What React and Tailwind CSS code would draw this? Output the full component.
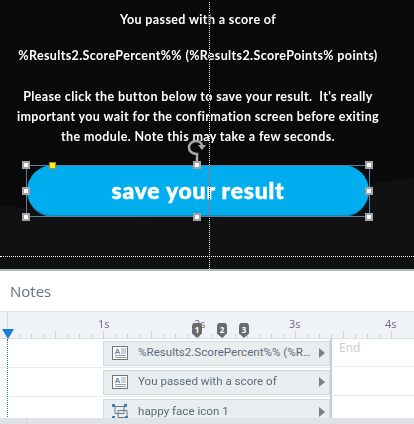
import React from "react";

const handles = [
  "left-[-5px] top-[-4px]",
  "left-[166px] top-[-4px]",
  "left-[338px] top-[-4px]",
  "left-[-5px] top-[22px]",
  "left-[338px] top-[22px]",
  "left-[-5px] top-[48px]",
  "left-[166px] top-[48px]",
  "left-[338px] top-[48px]",
];

const markers = [
  { n: 1, cls: "left-[192px]" },
  { n: 2, cls: "left-[217px]" },
  { n: 3, cls: "left-[239px]" },
];

function TextIcon() {
  return (
    <svg width="16" height="14" viewBox="0 0 16 14" className="shrink-0">
      <rect x="0.5" y="0.5" width="15" height="13" fill="#fff" stroke="#6f7880" />
      <text x="2.5" y="8" fontSize="8" fontWeight="700" fill="#6a7fc4" fontFamily="Liberation Sans, sans-serif">A</text>
      <path d="M9 3h5M9 5h5M9 7h5M3 9.5h11M3 11.5h11" stroke="#9aa3ab" strokeWidth="1" />
    </svg>
  );
}

function GroupIcon() {
  return (
    <svg width="16" height="16" viewBox="0 0 16 16" className="shrink-0">
      <path d="M3 2.5h9v7H3zM6 6.5h9v7H6z" fill="none" stroke="#6f7880" />
      <path d="M0 0h3v3H0zM12 0h3v3h-3zM0 12h3v3H0zM13 12h3v3h-3z" fill="#3f7fc0" />
    </svg>
  );
}

function Clip({ icon, children }) {
  return (
    <div className="ml-[103px] flex h-[25px] w-[227px] shrink-0 items-center border border-[#d3dade] bg-[#e8edf0] pl-[8px] pr-[4px]">
      {icon}
      <span className="ml-[10px] min-w-0 flex-1 truncate font-['Roboto',sans-serif] text-[11.6px] text-[#5c6c7a]">{children}</span>
      <span className="ml-[4px] h-0 w-0 border-y-[5px] border-l-[6px] border-y-transparent border-l-[#7a7f84]" />
    </div>
  );
}

export default function App() {
  return (
    <div className="relative h-[424px] w-[414px] overflow-hidden bg-white font-['Open_Sans',sans-serif]">
      {/* slide area */}
      <div className="relative h-[269px] bg-[#0a0a0a] text-white">
        <svg width="414" height="269" className="absolute inset-0">
          <path d="M0 205C60 212 110 218 200 218C280 218 340 184 414 178V269H0Z" fill="#111111" />
        </svg>
        <div className="relative w-[396px] pt-[10px] text-center font-['Lato',sans-serif] text-[12.5px] font-bold leading-[20px] tracking-[0.37px]">
          <p>You passed with a score of</p>
          <p className="mt-[16px] whitespace-nowrap">%Results2.ScorePercent%% (%Results2.ScorePoints% points)</p>
          <p className="mt-[21px]">Please click the button below to save your result.&nbsp; It's really</p>
          <p className="whitespace-nowrap">important you wait for the confirmation screen before exiting</p>
          <p>the module. Note this may take a few seconds.</p>
        </div>

        <div className="relative ml-[27px] mt-[18px] flex h-[52px] w-[342px] items-center justify-center rounded-[26px] border-b-2 border-[#0f88bd] bg-[#00adef]">
          <span className="font-['Lato',sans-serif] text-[23px] font-black leading-none tracking-[0.75px] text-white [-webkit-text-stroke:0.5px_white]">save your result</span>
          <div className="absolute inset-x-[-1px] inset-y-0 bottom-[-2px] border border-[#5a7fa0]" />
          {handles.map((h) => (
            <div key={h} className={`absolute h-[8px] w-[8px] border-2 border-[#a3a3a3] bg-white ${h}`} />
          ))}
          <div className="absolute left-[22px] top-[-3px] h-[7px] w-[7px] border border-[#a08a50] bg-[#fff200]" />
          <svg width="20" height="26" viewBox="0 0 20 26" className="absolute left-[160px] top-[-26px]">
            <path d="M10 24V15C5 15 2 12 2 8.5C2 5 5 2 9 2C12 2 14 3.5 15 6" fill="none" stroke="#a8a8a8" strokeWidth="2.5" />
            <path d="M11 6L19 6L15 11Z" fill="#a8a8a8" />
          </svg>
        </div>

        {/* guides */}
        <div className="absolute bottom-0 left-[209px] top-[2px] w-px border-l border-dotted border-white mix-blend-difference" />
        <div className="absolute left-0 right-0 top-[256px] h-px border-t border-dotted border-white" />
      </div>
      <div className="h-[2px] bg-[#b4b7c6]" />

      {/* notes */}
      <div className="flex h-[40px] items-center pl-[10px] text-[15px] text-[#66727c]">Notes</div>

      {/* timeline */}
      <div className="relative">
        <div className="relative h-[28px] border-y border-[#dde1e4] bg-[#eff3f7]">
          <svg width="414" height="27" className="absolute inset-0">
            <path d="M7.5 0V18" stroke="#d3d8dc" />
            {Array.from({ length: 33 }, (_, i) => {
              const x = 7.5 + i * 12;
              const tall = i % 4 === 0;
              return <path key={i} d={`M${x} ${tall ? 19 : 22}V27`} stroke="#ccd2d6" />;
            })}
          </svg>
          <div className="relative flex pl-[98px] pt-[4px] text-[11px] leading-[16px] text-[#6b6480]">
            <span className="w-[96px] shrink-0">1s</span>
            <span className="w-[95px] shrink-0">2s</span>
            <span className="w-[96px] shrink-0">3s</span>
            <span className="shrink-0">4s</span>
          </div>
          {markers.map((m) => (
            <div key={m.n} className={`absolute top-[11px] flex h-[15px] w-[10px] justify-center bg-[#6b6b6b] pt-[2px] text-[8px] font-bold leading-[9px] text-white [clip-path:polygon(15%_0,85%_0,100%_15%,100%_70%,50%_100%,0_70%,0_15%)] ${m.cls}`}>{m.n}</div>
          ))}
        </div>

        <div className="relative h-[80px]">
          <div className="flex h-[29px] items-center border-b border-[#eaecee]">
            <Clip icon={<TextIcon />}>%Results2.ScorePercent%% (%Results2.ScorePoints% points)</Clip>
          </div>
          <div className="flex h-[29px] items-center border-b border-[#eaecee]">
            <Clip icon={<TextIcon />}>You passed with a score of</Clip>
          </div>
          <div className="flex pt-[2px]">
            <Clip icon={<GroupIcon />}>happy face icon 1</Clip>
          </div>
          <div className="absolute bottom-0 left-[330px] right-0 top-0 border-l-2 border-[#c6cfd6] bg-white">
            <div className="h-[28px] border-b border-[#eaecee] pl-[7px] text-[12px] leading-[18px] text-[#c6ccd4]">End</div>
            <div className="h-[29px] border-b border-[#eaecee]" />
          </div>
        </div>

        {/* playhead */}
        <div className="absolute left-[2px] top-[18px] h-0 w-0 border-x-[6px] border-t-[10px] border-x-transparent border-t-[#1b7fd0]" />
        <div className="absolute bottom-0 left-[7px] top-[28px] w-px border-l border-dotted border-[#1b7fd0]" />
      </div>

      {/* scrollbar */}
      <div className="absolute bottom-0 left-0 right-0 flex h-[6px] bg-[#dfe3e6]">
        <div className="w-[27px] border-r border-[#cfd4d8]" />
      </div>
    </div>
  );
}
